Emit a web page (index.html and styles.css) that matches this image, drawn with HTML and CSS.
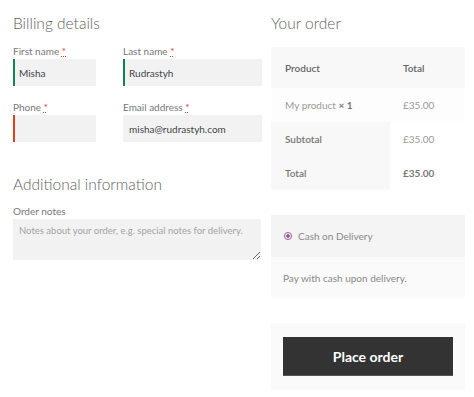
FILE: index.html
```html
<!DOCTYPE html>
<html lang="en">
<head>
    <meta charset="UTF-8">
    <meta name="viewport" content="width=device-width, initial-scale=1.0">
    <title>Checkout</title>
    <link rel="stylesheet" href="styles.css">
</head>
<body>
    <div class="checkout">
        <div class="col-billing">
            <h3 class="section-title">Billing details</h3>
            <div class="fields">
                <div class="field field-first">
                    <label>First name <abbr class="required">*</abbr></label>
                    <input class="input valid" type="text" value="Misha">
                </div>
                <div class="field field-last">
                    <label>Last name <abbr class="required">*</abbr></label>
                    <input class="input valid" type="text" value="Rudrastyh">
                </div>
                <div class="field field-first">
                    <label>Phone <abbr class="required">*</abbr></label>
                    <input class="input invalid" type="text" value="">
                </div>
                <div class="field field-last">
                    <label>Email address <abbr class="required">*</abbr></label>
                    <input class="input" type="text" value="misha@rudrastyh.com">
                </div>
            </div>

            <h3 class="section-title additional">Additional information</h3>
            <div class="field">
                <label>Order notes</label>
                <textarea class="notes" placeholder="Notes about your order, e.g. special notes for delivery."></textarea>
            </div>
        </div>

        <div class="col-order">
            <h3 class="section-title">Your order</h3>
            <table class="order-table">
                <thead>
                    <tr>
                        <th class="col-name">Product</th>
                        <th class="col-total">Total</th>
                    </tr>
                </thead>
                <tbody>
                    <tr class="cart-item">
                        <td>My product <strong>&times;&nbsp;1</strong></td>
                        <td>£35.00</td>
                    </tr>
                </tbody>
                <tfoot>
                    <tr>
                        <th>Subtotal</th>
                        <td>£35.00</td>
                    </tr>
                    <tr>
                        <th>Total</th>
                        <td><strong>£35.00</strong></td>
                    </tr>
                </tfoot>
            </table>

            <div class="payment">
                <div class="payment-method">
                    <span class="radio"></span>
                    <span>Cash on Delivery</span>
                </div>
                <div class="payment-box">Pay with cash upon delivery.</div>
            </div>

            <div class="place-order">
                <button class="button">Place order</button>
            </div>
        </div>
    </div>
</body>
</html>
```

FILE: styles.css
```css
:root {
    --text-color: #6d6d6d;
    --input-text: #43454b;
    --input-bg: #f2f2f2;
    --valid-color: #0f834d;
    --invalid-color: #e2401c;
    --accent: #96588a;
}

body {
    margin: 0;
    font-family: Lato, "Liberation Sans", sans-serif;
    font-size: 10px;
    color: var(--text-color);
    background: #fff;
}

.checkout {
    display: flex;
    gap: 9px;
    padding: 12px 9px 0 13px;
}

.col-billing {
    width: 249px;
}

.col-order {
    width: 194px;
}

.section-title {
    margin: 0;
    font-size: 15.5px;
    font-weight: 300;
    line-height: 22px;
    color: #5f5f5f;
}

/* Billing fields */
.fields {
    display: flex;
    flex-wrap: wrap;
    column-gap: 27px;
    row-gap: 14px;
    margin-top: 10px;
}

.field label {
    display: block;
    height: 14px;
    line-height: 14px;
    margin-bottom: 1px;
    color: #777;
}

.field-first {
    width: 83px;
}

.field-last {
    width: 139px;
}

.required {
    color: #e2401c;
    text-decoration: underline dotted;
    border: none;
}

.input {
    box-sizing: border-box;
    display: block;
    width: 100%;
    height: 27px;
    border: none;
    background: var(--input-bg);
    padding: 0 6px;
    font-family: inherit;
    font-size: 10px;
    color: var(--input-text);
    outline: none;
}

.input.valid {
    border-left: 2px solid var(--valid-color);
    padding-left: 4px;
}

.input.invalid {
    border-left: 2px solid var(--invalid-color);
    padding-left: 4px;
}

.additional {
    margin-top: 31px;
    margin-bottom: 9px;
}

.notes {
    box-sizing: border-box;
    display: block;
    width: 248px;
    height: 41px;
    border: none;
    background: var(--input-bg);
    padding: 6px 6px;
    font-family: inherit;
    font-size: 9.5px;
    color: #999;
    resize: vertical;
    outline: none;
}

.notes::placeholder {
    color: #a3a3a3;
}

/* Order review */
.order-table {
    width: 194px;
    margin-top: 13px;
    border-collapse: collapse;
    text-align: left;
}

.order-table th,
.order-table td {
    padding: 0 0 0 14px;
    height: 34px;
    font-size: 10px;
}

.order-table thead th {
    height: 41px;
    background: #f8f8f8;
    color: #666;
    font-weight: 600;
}

.order-table .col-name {
    width: 105px;
}

.order-table td:last-child,
.order-table th:last-child {
    padding-left: 13px;
}

.cart-item td {
    background: #fdfdfd;
    color: #999;
}

.cart-item strong {
    color: #777;
}

.order-table tfoot th {
    background: #f8f8f8;
    color: #777;
    font-weight: 600;
}

.order-table tfoot td {
    color: #999;
}

.order-table tfoot strong {
    color: #777;
}

.payment {
    margin-top: 25px;
}

.payment-method {
    display: flex;
    align-items: center;
    gap: 6px;
    height: 42px;
    padding-left: 13px;
    background: #f4f4f4;
    color: #888;
}

.radio {
    box-sizing: border-box;
    width: 8px;
    height: 8px;
    border-radius: 50%;
    border: 1.5px solid var(--accent);
    background: radial-gradient(circle, var(--accent) 0 1.5px, #fff 2px);
}

.payment-box {
    display: flex;
    align-items: center;
    height: 41px;
    padding-left: 12px;
    background: #fafafa;
    color: #888;
}

.place-order {
    margin-top: 25px;
    padding: 14px 12px;
    background: #fafafa;
}

.button {
    display: block;
    width: 100%;
    height: 39px;
    border: none;
    border-bottom: 1px solid #555;
    background: #333;
    color: #fff;
    font-family: inherit;
    font-size: 14px;
    font-weight: 700;
    cursor: pointer;
}
```
